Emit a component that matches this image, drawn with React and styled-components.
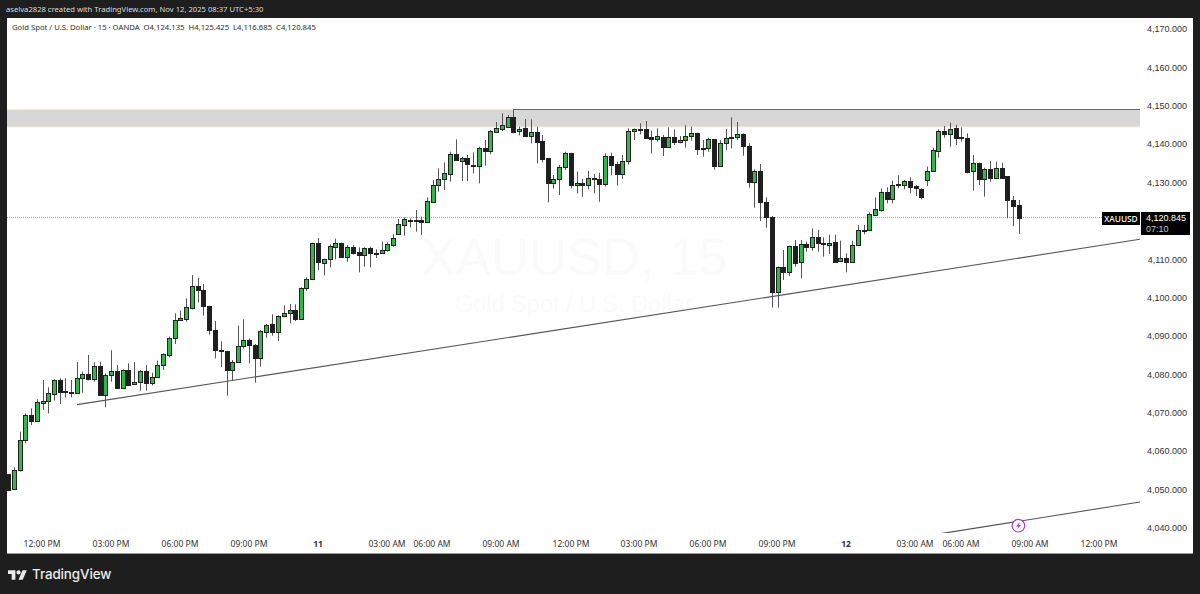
import React from "react";
import styled, { createGlobalStyle } from "styled-components";

const GlobalStyle = createGlobalStyle`
  html, body {
    margin: 0;
    padding: 0;
    background: #1e1e1e;
  }
`;

const Page = styled.div`
  width: 1200px;
  height: 594px;
  overflow: hidden;
  display: flex;
  flex-direction: column;
  background: #1e1e1e;
  font-family: "Noto Sans", "Liberation Sans", sans-serif;
`;

const Header = styled.div`
  flex: none;
  height: 18px;
  padding-left: 6px;
  display: flex;
  align-items: center;
  font-size: 7.65px;
  color: #dcdcdc;
  white-space: pre;
`;

const Frame = styled.div`
  flex: none;
  height: 536px;
  margin-left: 7px;
  width: 1186px;
  display: flex;
  flex-direction: column;
  background: #fff;
  border-bottom: 1px solid #9a9a9a;
  box-sizing: border-box;
`;

const ChartRow = styled.div`
  flex: none;
  height: 515px;
  display: flex;
`;

const Plot = styled.div`
  position: relative;
  width: 1133px;
  height: 515px;
  overflow: hidden;
`;

const Legend = styled.div`
  position: absolute;
  left: 5px;
  top: 4px;
  font-size: 7.7px;
  line-height: 11px;
  color: #2e2e2e;
  white-space: pre;
`;

const Watermark = styled.div`
  position: absolute;
  left: 414px;
  top: 207px;
  color: #fafafa;
  font-family: "Liberation Sans", sans-serif;
  white-space: pre;
`;

const WatermarkTitle = styled.div`
  font-size: 52.5px;
  line-height: 64px;
`;

const WatermarkSub = styled.div`
  margin: 2px 0 0 34px;
  font-size: 23.5px;
  line-height: 26px;
`;

const ChartSvg = styled.svg`
  position: absolute;
  left: 0;
  top: 0;
  display: block;
`;

const SymbolTag = styled.div`
  position: absolute;
  right: 0;
  top: 194px;
  width: 38px;
  height: 13px;
  display: flex;
  align-items: center;
  justify-content: center;
  background: #000;
  color: #fff;
  font-size: 8.3px;
  font-weight: 500;
`;

const PriceScale = styled.div`
  position: relative;
  width: 53px;
  height: 515px;
  font-family: "Liberation Sans", sans-serif;
  font-size: 9px;
`;

const PriceList = styled.div`
  display: flex;
  flex-direction: column;
  margin-top: -8px;
`;

const PriceRow = styled.div`
  flex: none;
  height: 38.4px;
  padding-right: 6px;
  display: flex;
  align-items: center;
  justify-content: flex-end;
  color: #333;
`;

const PriceTag = styled.div`
  position: absolute;
  left: 1px;
  top: 194px;
  width: 49px;
  height: 23px;
  padding: 1px 0 0 5px;
  box-sizing: border-box;
  display: flex;
  flex-direction: column;
  background: #000;
  color: #fff;
  line-height: 10.5px;
`;

const Countdown = styled.span`
  color: #c8c8c8;
`;

const TimeAxis = styled.div`
  position: relative;
  flex: 1;
`;

const TimeLabel = styled.span.attrs((p) => ({ style: { left: p.$x - 7 } }))`
  position: absolute;
  top: 5px;
  transform: translateX(-50%);
  font-size: 8.5px;
  line-height: 12px;
  font-weight: ${(p) => (p.$bold ? 700 : 400)};
  color: #333;
  white-space: nowrap;
`;

const Footer = styled.div`
  flex: 1;
  padding: 0 0 1px 8px;
  display: flex;
  align-items: center;
  gap: 5px;
`;

const LogoMark = styled.svg`
  display: block;
  width: 19px;
  height: 12px;
`;

const LogoText = styled.span`
  font-family: Inter, "Noto Sans", sans-serif;
  font-size: 13.4px;
  font-weight: 500;
  color: #eaeaea;
  letter-spacing: -0.1px;
`;

// candles read off the picture: x, high, body top, body bottom, low, green
const segments = [
  {
    dx: 0,
    dy: 240,
    rows: [
      [25, 703, 703, 750, 750, 0], [42, 682, 690, 748, 748, 1], [59, 575, 600, 690, 695, 1],
      [75, 520, 525, 600, 610, 1], [93, 505, 525, 543, 555, 0], [110, 478, 487, 542, 542, 1],
      [128, 420, 482, 488, 510, 1], [144, 442, 460, 483, 520, 1], [161, 418, 421, 461, 482, 1],
      [179, 415, 421, 456, 492, 0], [196, 415, 454, 456, 472, 0], [213, 420, 455, 458, 472, 0],
      [230, 366, 413, 459, 460, 1], [247, 395, 403, 413, 458, 1], [265, 345, 402, 417, 421, 0],
      [283, 367, 379, 416, 425, 1], [299, 365, 378, 465, 465, 0], [316, 400, 404, 465, 502, 1],
      [334, 331, 392, 404, 425, 1], [351, 375, 392, 444, 445, 0], [368, 388, 390, 443, 444, 1],
      [385, 370, 390, 434, 434, 0], [403, 366, 425, 433, 435, 1], [420, 390, 392, 426, 452, 1],
      [438, 375, 392, 428, 452, 0], [455, 398, 412, 428, 436, 1], [472, 362, 375, 412, 414, 1],
      [490, 340, 343, 375, 390, 1], [507, 290, 294, 344, 352, 1], [524, 220, 241, 295, 312, 1],
      [541, 212, 235, 240, 240, 1], [558, 175, 202, 236, 245, 1], [575, 105, 139, 203, 208, 1],
      [593, 113, 139, 151, 187, 0], [609, 132, 151, 198, 227, 0], [627, 197, 198, 271, 284, 0],
      [644, 243, 270, 329, 355, 0], [662, 304, 329, 333, 381, 0], [680, 333, 334, 389, 467, 0],
      [696, 360, 365, 389, 422, 1], [713, 257, 318, 365, 365, 1], [730, 238, 300, 318, 326, 1],
      [748, 295, 301, 316, 370, 0], [764, 312, 316, 355, 428, 0], [781, 270, 274, 355, 380, 1],
      [799, 252, 255, 275, 293, 1], [817, 223, 253, 276, 287, 0], [834, 226, 229, 275, 303, 1],
      [851, 196, 218, 229, 232, 1], [869, 192, 210, 218, 250, 1], [886, 193, 211, 236, 243, 0],
      [903, 142, 143, 236, 236, 1], [919, 112, 118, 143, 153, 1], [937, 8, 10, 118, 118, 1],
      [954, -6, 10, 67, 90, 0], [972, 56, 57, 68, 106, 1], [990, 13, 19, 57, 82, 1],
      [1005, -4, 8, 20, 58, 1], [1023, 8, 8, 52, 52, 0], [1041, 15, 22, 52, 65, 1],
      [1058, 14, 22, 38, 44, 0], [1076, 22, 37, 44, 97, 0], [1092, 22, 25, 44, 80, 1],
      [1109, 20, 24, 38, 82, 0], [1127, 28, 40, 41, 54, 0], [1145, 5, 30, 40, 40, 1],
      [1160, 7, 13, 30, 35, 1], [1178, -17, -5, 15, 20, 1],
    ],
  },
  {
    dx: 400,
    dy: 100,
    rows: [
      [-5, 357, 373, 402, 405, 1], [12, 352, 358, 374, 407, 1], [30, 355, 359, 362, 382, 0],
      [47, 330, 361, 364, 395, 0], [64, 350, 361, 365, 405, 0], [82, 292, 304, 365, 365, 1],
      [99, 240, 256, 306, 308, 1], [115, 205, 238, 254, 275, 1], [133, 187, 220, 238, 270, 1],
      [150, 155, 161, 222, 245, 1], [168, 118, 161, 181, 181, 0], [186, 170, 175, 184, 243, 1],
      [202, 165, 175, 193, 243, 0], [220, 157, 195, 199, 220, 0], [237, 140, 143, 197, 250, 1],
      [255, 120, 144, 154, 197, 0], [270, 90, 94, 154, 163, 1], [288, 66, 85, 95, 95, 1],
      [305, 40, 76, 88, 93, 1], [323, 45, 50, 80, 80, 1], [340, 28, 50, 97, 100, 0],
      [357, 80, 87, 94, 106, 1], [374, 57, 84, 108, 108, 0], [392, 58, 97, 109, 130, 1],
      [410, 80, 96, 125, 190, 0], [427, 105, 122, 177, 187, 0], [443, 174, 175, 250, 307, 0],
      [460, 225, 236, 250, 266, 1], [478, 195, 201, 236, 285, 1], [495, 155, 159, 201, 210, 1],
      [512, 158, 159, 255, 265, 0], [530, 215, 248, 254, 280, 1], [547, 237, 248, 254, 291, 0],
      [565, 213, 234, 254, 268, 1], [582, 222, 234, 238, 280, 0], [598, 218, 238, 252, 305, 0],
      [615, 160, 168, 252, 260, 1], [633, 158, 169, 194, 226, 0], [651, 185, 192, 222, 257, 0],
      [667, 165, 184, 223, 237, 1], [684, 85, 92, 184, 193, 1], [702, 85, 87, 94, 120, 1],
      [720, 70, 88, 91, 103, 0], [737, 63, 88, 113, 113, 0], [752, 92, 110, 117, 160, 0],
      [770, 85, 108, 117, 125, 1], [788, 105, 111, 141, 168, 0], [805, 82, 110, 140, 140, 1],
      [822, 88, 110, 126, 135, 0], [840, 108, 120, 127, 130, 1], [856, 76, 108, 121, 143, 1],
      [874, 80, 100, 109, 122, 1], [892, 98, 100, 146, 165, 0], [908, 120, 144, 146, 170, 0],
      [925, 113, 118, 145, 155, 1], [943, 117, 118, 197, 209, 0], [961, 120, 128, 198, 200, 1],
      [978, 87, 115, 128, 150, 1], [994, 52, 112, 115, 145, 0], [1012, 66, 102, 110, 120, 1],
      [1029, 100, 103, 138, 167, 0], [1047, 130, 138, 245, 263, 0], [1063, 208, 213, 246, 323, 1],
      [1080, 192, 214, 306, 363, 0], [1098, 292, 306, 350, 383, 0], [1115, 348, 350, 575, 623, 0],
      [1133, 500, 500, 575, 623, 1], [1150, 450, 500, 516, 540, 0], [1167, 437, 438, 516, 528, 1],
      [1184, 420, 438, 488, 500, 0],
    ],
  },
  {
    dx: 750,
    dy: 100,
    rows: [
      [152, 420, 433, 485, 535, 1], [168, 425, 433, 440, 455, 0], [185, 385, 412, 440, 452, 1],
      [203, 390, 412, 428, 455, 0], [220, 412, 428, 433, 470, 0], [238, 404, 428, 434, 462, 1],
      [254, 404, 426, 485, 485, 0], [271, 422, 475, 484, 485, 1], [289, 460, 473, 487, 517, 0],
      [307, 422, 436, 485, 489, 1], [325, 375, 391, 434, 434, 1], [342, 375, 390, 392, 403, 0],
      [358, 337, 343, 391, 391, 1], [376, 292, 328, 344, 347, 1], [393, 265, 277, 330, 335, 1],
      [410, 262, 277, 297, 310, 0], [427, 242, 254, 297, 310, 1], [445, 226, 252, 255, 265, 0],
      [462, 240, 244, 255, 268, 1], [480, 232, 244, 262, 280, 0], [497, 255, 259, 265, 288, 0],
      [513, 265, 268, 290, 298, 0], [531, 200, 212, 239, 258, 1], [548, 143, 151, 213, 215, 1],
      [565, 88, 92, 152, 173, 1], [582, 78, 93, 103, 113, 0], [599, 68, 87, 103, 140, 1],
      [617, 75, 84, 113, 135, 0], [634, 82, 112, 115, 125, 0], [651, 100, 114, 215, 220, 0],
      [668, 165, 190, 213, 272, 1], [686, 188, 190, 237, 255, 0], [703, 203, 207, 236, 290, 1],
      [720, 183, 206, 235, 245, 0], [737, 185, 203, 233, 235, 1], [755, 188, 203, 233, 235, 0],
      [772, 228, 228, 301, 355, 0], [789, 288, 300, 317, 378, 0], [806, 300, 316, 354, 402, 0],
    ],
  },
];

const candles = segments.flatMap(({ dx, dy, rows }) =>
  rows.map(([x, hi, top, bot, lo, green]) => ({
    x: Math.round(x / 3 + dx) + 0.5,
    hi: hi / 3 + dy,
    top: Math.round(top / 3 + dy) + 0.5,
    bot: Math.round(bot / 3 + dy) + 0.5,
    lo: lo / 3 + dy,
    green,
  }))
);

// the 4,120 row sits under the live price tag, so it stays empty
const prices = [
  "4,170.000", "4,160.000", "4,150.000", "4,140.000", "4,130.000", "", "4,110.000",
  "4,100.000", "4,090.000", "4,080.000", "4,070.000", "4,060.000", "4,050.000", "4,040.000",
];

const times = [
  { x: 42, text: "12:00 PM" }, { x: 111, text: "03:00 PM" }, { x: 180, text: "06:00 PM" },
  { x: 249, text: "09:00 PM" }, { x: 318, text: "11", bold: true }, { x: 387, text: "03:00 AM" },
  { x: 432, text: "06:00 AM" }, { x: 501, text: "09:00 AM" }, { x: 571, text: "12:00 PM" },
  { x: 639, text: "03:00 PM" }, { x: 708, text: "06:00 PM" }, { x: 777, text: "09:00 PM" },
  { x: 846, text: "12", bold: true }, { x: 915, text: "03:00 AM" }, { x: 961, text: "06:00 AM" },
  { x: 1030, text: "09:00 AM" }, { x: 1099, text: "12:00 PM" },
];

function Chart() {
  return (
    <ChartSvg width="1133" height="515" viewBox="7 18 1133 515">
      <rect x="7" y="109.5" width="1133" height="17.5" fill="#d7d7d7" />
      <line x1="7" y1="109.5" x2="513" y2="109.5" stroke="#f8eedd" />
      <line x1="7" y1="127" x2="1140" y2="127" stroke="#f8eedd" />
      <line x1="513" y1="109.5" x2="1140" y2="109.5" stroke="#666" />
      <line x1="7" y1="217.5" x2="1102" y2="217.5" stroke="#a8a8a8" strokeDasharray="1 1" />
      <line x1="77" y1="404.6" x2="1140" y2="239.3" stroke="#555" strokeWidth="1.1" />
      <line x1="942.5" y1="533.4" x2="1140" y2="502" stroke="#555" strokeWidth="1.1" />
      {candles.map((c) => (
        <g key={c.x}>
          <line x1={c.x} y1={c.hi} x2={c.x} y2={c.lo} stroke="#555" />
          <rect
            x={c.x - 2}
            y={c.top}
            width="4"
            height={Math.max(c.bot - c.top, 1)}
            fill={c.green ? "#36b54a" : "#1e1e1e"}
            stroke="#222"
          />
        </g>
      ))}
      <circle cx="1018.4" cy="525.7" r="6.3" fill="#fff" stroke="#ab3fc6" strokeWidth="1.2" />
      <path d="M1020 521.8 L1016 526.4 H1018.3 L1016.9 529.6 L1021 525 H1018.6 Z" fill="#ab3fc6" />
    </ChartSvg>
  );
}

export default function App() {
  return (
    <Page>
      <GlobalStyle />
      <Header>aselva2828 created with TradingView.com, Nov 12, 2025 08:37 UTC+5:30</Header>
      <Frame>
        <ChartRow>
          <Plot>
            <Watermark>
              <WatermarkTitle>XAUUSD, 15</WatermarkTitle>
              <WatermarkSub>Gold Spot / U.S. Dollar</WatermarkSub>
            </Watermark>
            <Chart />
            <Legend>{"Gold Spot / U.S. Dollar · 15 · OANDA  O4,124.135  H4,125.425  L4,116.685  C4,120.845"}</Legend>
            <SymbolTag>XAUUSD</SymbolTag>
          </Plot>
          <PriceScale>
            <PriceList>
              {prices.map((p, i) => (
                <PriceRow key={i}>{p}</PriceRow>
              ))}
            </PriceList>
            <PriceTag>
              <span>4,120.845</span>
              <Countdown>07:10</Countdown>
            </PriceTag>
          </PriceScale>
        </ChartRow>
        <TimeAxis>
          {times.map((t) => (
            <TimeLabel key={t.x} $x={t.x} $bold={t.bold}>
              {t.text}
            </TimeLabel>
          ))}
        </TimeAxis>
      </Frame>
      <Footer>
        <LogoMark viewBox="0 0 36 22" fill="#eaeaea">
          <path d="M14 22H7V11H0V4h14v18zM28 22h-8l7.5-18h8L28 22z" />
          <circle cx="20" cy="8" r="4" />
        </LogoMark>
        <LogoText>TradingView</LogoText>
      </Footer>
    </Page>
  );
}
